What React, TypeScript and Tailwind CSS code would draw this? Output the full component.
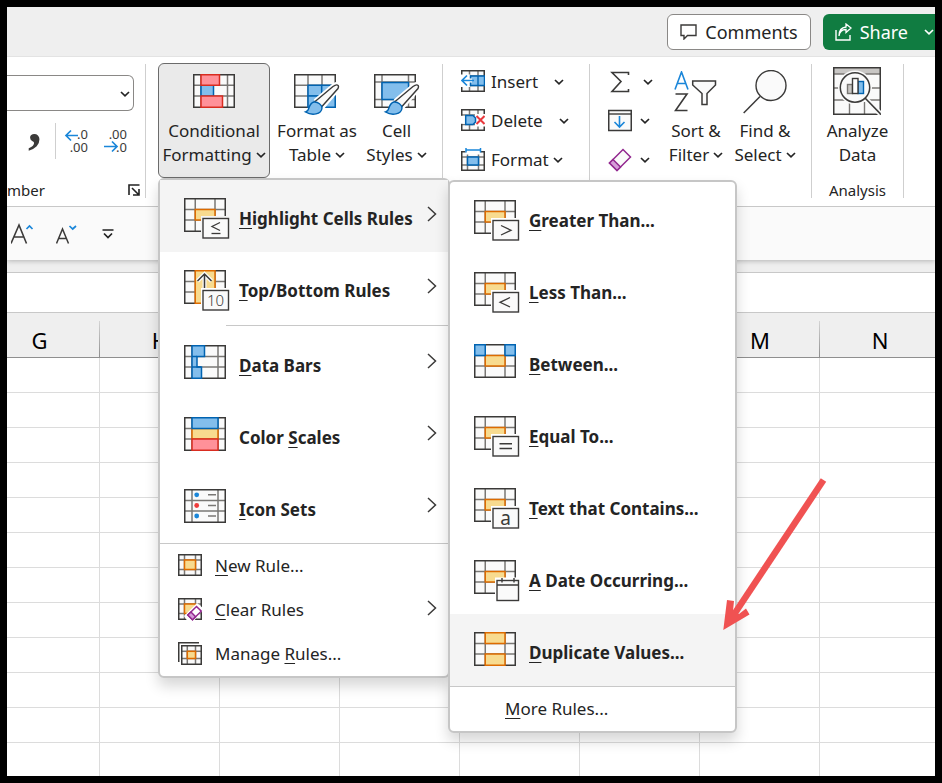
import type { ReactNode } from "react";

const DARK = "#3b3a39";
const MID = "#797774";
const PAPER = "#fafafa";

const BLUE = { fill: "#83beec", stroke: "#0063b1" };
const ORANGE = { fill: "#f8db8f", stroke: "#dd6b00" };
const RED = { fill: "#ff9199", stroke: "#d92c20" };
const PURPLE = "#92278f";

type Tone = { fill: string; stroke: string };

interface CellProps {
  x: number;
  y: number;
  w: number;
  h: number;
  tone: Tone;
}

const Cell = ({ x, y, w, h, tone }: CellProps) => (
  <rect x={x} y={y} width={w} height={h} fill={tone.fill} stroke={tone.stroke} strokeWidth="1.5" />
);

const Grid = ({ w = 42, h = 34, xs, ys }: { w?: number; h?: number; xs: number[]; ys: number[] }) => (
  <g>
    <rect x="1" y="1" width={w - 2} height={h - 2} fill={PAPER} />
    <g stroke={MID} strokeWidth="1.5">
      {xs.map((x) => (
        <path key={`x${x}`} d={`M${x} 1V${h - 1}`} />
      ))}
      {ys.map((y) => (
        <path key={`y${y}`} d={`M1 ${y}H${w - 1}`} />
      ))}
    </g>
    <rect x="0.75" y="0.75" width={w - 1.5} height={h - 1.5} fill="none" stroke={DARK} strokeWidth="1.5" />
  </g>
);

const LargeIcon = ({ children }: { children: ReactNode }) => (
  <svg width="46" height="42" viewBox="0 0 46 42" fill="none" aria-hidden="true" className="shrink-0">
    {children}
  </svg>
);

// Rule icon: table with one marked cell and a small card over its corner
const RuleIcon = ({ children, halo = "white" }: { children: ReactNode; halo?: string }) => (
  <LargeIcon>
    <Grid xs={[11.25, 31]} ys={[11.5, 22]} />
    <Cell x={11.25} y={11.5} w={19.75} h={10.5} tone={ORANGE} />
    <rect x="17" y="18" width="30" height="25" fill={halo} />
    <rect x="19" y="20.5" width="25.5" height="19.5" fill={PAPER} stroke={DARK} strokeWidth="1.4" />
    {children}
  </LargeIcon>
);

const HighlightIcon = () => (
  <RuleIcon halo="#f4f4f4">
    <path d="M36 24.500L28 28.500L36 32.500" stroke={DARK} strokeWidth="1.3" />
    <path d="M27.500 35.500H36.500" stroke={DARK} strokeWidth="1.3" />
  </RuleIcon>
);

const TopBottomIcon = () => (
  <LargeIcon>
    <Grid xs={[11.25, 31]} ys={[11.5, 22]} />
    <Cell x={11.25} y={0.75} w={19.75} h={32.5} tone={ORANGE} />
    <path d="M20.5 20V4M13.5 11L20.5 4L27.5 11" stroke={PAPER} strokeWidth="4" />
    <path d="M20.5 20V4M13.5 11L20.5 4L27.5 11" stroke={DARK} strokeWidth="1.5" />
    <rect x="17" y="18" width="30" height="25" fill="white" />
    <rect x="19" y="20.5" width="25.5" height="19.5" fill={PAPER} stroke={DARK} strokeWidth="1.4" />
    <text x="31.5" y="36" textAnchor="middle" fontSize="15" fontWeight="300" fill={DARK}>
      10
    </text>
  </LargeIcon>
);

const DataBarsIcon = () => (
  <LargeIcon>
    <Grid xs={[8, 34]} ys={[11.5, 22]} />
    <path
      d="M8 0.75H20.5V11.5H13V22H17.5V33.25H8Z"
      fill={BLUE.fill}
      stroke={BLUE.stroke}
      strokeWidth="1.5"
    />
    <path d="M8 11.5H13M8 22H17" stroke={BLUE.stroke} strokeWidth="1.5" />
  </LargeIcon>
);

const ColorScalesIcon = () => (
  <LargeIcon>
    <Grid xs={[8, 34]} ys={[11.5, 22]} />
    <Cell x={8} y={11.5} w={26} h={10.5} tone={ORANGE} />
    <Cell x={8} y={0.75} w={26} h={10.75} tone={BLUE} />
    <Cell x={8} y={22} w={26} h={11.25} tone={RED} />
  </LargeIcon>
);

const IconSetsIcon = () => (
  <LargeIcon>
    <Grid xs={[8, 34]} ys={[11.5, 22]} />
    <circle cx="12.7" cy="5.8" r="2.4" fill="#1a86d9" />
    <circle cx="12.7" cy="16.5" r="2.4" fill="#ee3b3b" />
    <circle cx="12.7" cy="27" r="2.4" fill="#1a86d9" />
    <path d="M24 5.8H32M24 16.5H32M24 27H32" stroke={MID} strokeWidth="1.5" />
  </LargeIcon>
);

const GreaterIcon = () => (
  <RuleIcon>
    <path d="M27 25.5L37 30.3L27 35" stroke={DARK} strokeWidth="1.3" />
  </RuleIcon>
);

const LessIcon = () => (
  <RuleIcon>
    <path d="M36 25.5L26 30.3L36 35" stroke={DARK} strokeWidth="1.3" />
  </RuleIcon>
);

const BetweenIcon = () => (
  <LargeIcon>
    <Grid xs={[11.25, 31]} ys={[11.5, 22]} />
    <Cell x={11.25} y={11.5} w={19.75} h={10.5} tone={ORANGE} />
    <Cell x={0.75} y={0.75} w={10.5} h={10.75} tone={BLUE} />
    <Cell x={31} y={0.75} w={10.25} h={10.75} tone={BLUE} />
  </LargeIcon>
);

const EqualIcon = () => (
  <RuleIcon>
    <path d="M25.5 27.8H38M25.5 32.5H38" stroke={DARK} strokeWidth="1.4" />
  </RuleIcon>
);

const TextIcon = () => (
  <RuleIcon>
    <text x="31.7" y="36.5" textAnchor="middle" fontSize="19" fontWeight="400" fill={DARK}>
      a
    </text>
  </RuleIcon>
);

const DateIcon = () => (
  <LargeIcon>
    <Grid xs={[11.25, 31]} ys={[11.5, 22]} />
    <Cell x={11.25} y={11.5} w={19.75} h={10.5} tone={ORANGE} />
    <rect x="21" y="17.5" width="26" height="25" fill="white" />
    <rect x="23" y="20.5" width="21.5" height="20" fill={PAPER} stroke={DARK} strokeWidth="1.4" />
    <path d="M23 25H44.500M28 18V22.500M40 18V22.500" stroke={DARK} strokeWidth="1.4" />
  </LargeIcon>
);

const DuplicateIcon = () => (
  <LargeIcon>
    <Grid xs={[11.25, 31]} ys={[11.5, 22]} />
    <Cell x={11.25} y={0.75} w={19.75} h={10.75} tone={ORANGE} />
    <Cell x={11.25} y={22} w={19.75} h={11.25} tone={ORANGE} />
  </LargeIcon>
);

const SmallIcon = ({ children }: { children: ReactNode }) => (
  <svg width="24" height="24" viewBox="0 0 24 24" fill="none" aria-hidden="true" className="shrink-0">
    {children}
  </svg>
);

const NewRuleIcon = () => (
  <SmallIcon>
    <Grid w={24} h={22} xs={[6.5, 17.5]} ys={[6, 15.5]} />
    <Cell x={6.5} y={6} w={11} h={9.5} tone={ORANGE} />
  </SmallIcon>
);

const ClearRulesIcon = () => (
  <SmallIcon>
    <Grid w={24} h={22} xs={[6.5, 17.5]} ys={[6, 15.5]} />
    <Cell x={6.5} y={6} w={11} h={9.5} tone={ORANGE} />
    <path d="M6 18L19 5L26 11L15 24H10Z" fill="white" />
    <path d="M9.800 17L18.500 8.500L23.300 13.200L14.500 21.800Z" fill="white" stroke={PURPLE} strokeWidth="1.5" />
    <path d="M9.800 17L13 14L17.600 18.700L14.500 21.800Z" fill="#d59dd8" stroke={PURPLE} strokeWidth="1.5" />
  </SmallIcon>
);

const ManageRulesIcon = () => (
  <SmallIcon>
    <path d="M0.750 20V0.750H21" stroke={DARK} strokeWidth="1.5" />
    <g transform="translate(3 3)">
      <Grid w={21} h={20} xs={[6.3, 14.5]} ys={[6.3, 13.5]} />
      <Cell x={6.3} y={6.3} w={8.2} h={7.2} tone={ORANGE} />
    </g>
  </SmallIcon>
);

const Brush = () => (
  <g>
    <path d="M21 27L40 11C44 8 47 11 45 14L29 33C28 41 18 42 11 39" stroke="white" strokeWidth="4" fill="white" />
    <path
      d="M20.500 28L39 12.500C43 9.500 45.500 11 44 14.500L27 33.500Z"
      fill={PAPER}
      stroke={DARK}
      strokeWidth="1.4"
    />
    <path
      d="M20 28C24 27.500 28 31 28 34C27.500 40.500 18 42 11.500 38C16.500 37 13.500 29.500 20 28Z"
      fill={BLUE.fill}
      stroke={BLUE.stroke}
      strokeWidth="1.4"
    />
  </g>
);

const ConditionalIcon = () => (
  <LargeIcon>
    <g transform="translate(2 0)">
      <Grid xs={[8, 34.5]} ys={[11.25, 22]} />
      <Cell x={8} y={11.25} w={12.5} h={10.75} tone={BLUE} />
      <Cell x={8} y={0.75} w={18.5} h={10.5} tone={RED} />
      <Cell x={8} y={22} w={21.5} h={11.25} tone={RED} />
    </g>
  </LargeIcon>
);

const FormatTableIcon = () => (
  <LargeIcon>
    <Grid xs={[14, 28]} ys={[11.25, 22]} />
    <Cell x={14} y={11.25} w={13.7} h={10.75} tone={BLUE} />
    <Cell x={27.7} y={11.25} w={13.5} h={10.75} tone={BLUE} />
    <Cell x={14} y={22} w={13.7} h={11.25} tone={BLUE} />
    <Cell x={27.7} y={22} w={13.5} h={11.25} tone={BLUE} />
    <Brush />
  </LargeIcon>
);

const CellStylesIcon = () => (
  <LargeIcon>
    <Grid xs={[8, 34.5]} ys={[8, 25.5]} />
    <Cell x={8} y={8.5} w={26.5} h={17} tone={BLUE} />
    <Brush />
  </LargeIcon>
);

const SortIcon = () => (
  <svg width="44" height="42" viewBox="0 0 44 42" fill="none" aria-hidden="true">
    <path d="M1 18.500L7.500 1L14 18.500M3.500 12.500H11.500" stroke="#1a86d9" strokeWidth="1.6" />
    <path d="M1.500 23H13L1.500 39.500H13.500" stroke={DARK} strokeWidth="1.6" />
    <path d="M18.700 10H41.500V14L33 22.500V33.500H28V22.500L18.700 14Z" fill={PAPER} stroke={DARK} strokeWidth="1.5" />
  </svg>
);

const FindIcon = () => (
  <svg width="44" height="44" viewBox="0 0 44 44" fill="none" aria-hidden="true">
    <circle cx="28" cy="15.500" r="15" fill={PAPER} stroke={DARK} strokeWidth="1.4" />
    <path d="M17 26.500L0.700 43" stroke={DARK} strokeWidth="1.5" />
  </svg>
);

const AnalyzeIcon = () => (
  <svg width="48" height="48" viewBox="0 0 48 48" fill="none" aria-hidden="true">
    <rect x="1" y="1" width="46" height="46" fill={PAPER} />
    <rect x="1" y="1" width="46" height="6" fill="#c8c6c4" />
    <path d="M1 7H47M1 21H8M38 21H47M1 33H12M34 33H47M16.500 35V47M31.500 35V47" stroke={MID} strokeWidth="1.4" />
    <rect x="0.750" y="0.750" width="46.500" height="46.500" stroke={DARK} strokeWidth="1.500" />
    <circle cx="22" cy="20.500" r="17" fill={PAPER} />
    <path d="M32 31L47.500 47" stroke={PAPER} strokeWidth="5" />
    <circle cx="22" cy="20.500" r="14.700" fill={PAPER} stroke={DARK} strokeWidth="1.500" />
    <path d="M32 31L47.500 47" stroke={DARK} strokeWidth="1.600" />
    <rect x="14.500" y="17.500" width="5" height="9" fill="#c8c6c4" stroke={MID} strokeWidth="1.400" />
    <rect x="25" y="14.500" width="5.500" height="12" fill={BLUE.fill} stroke={BLUE.stroke} strokeWidth="1.400" />
    <rect x="19.500" y="11.500" width="5.500" height="15" fill="white" stroke={DARK} strokeWidth="1.400" />
  </svg>
);

const InsertIcon = () => (
  <SmallIcon>
    <Grid w={24} h={22} xs={[8.5, 17]} ys={[6, 15.5]} />
    <rect x="-1" y="4.500" width="10" height="12.500" fill="white" />
    <Cell x={9.5} y={6} w={14} h={9.5} tone={BLUE} />
    <path d="M17 6V15.500" stroke={BLUE.stroke} strokeWidth="1.400" />
    <path d="M11 10.500H2" stroke="white" strokeWidth="4" />
    <path d="M13 10.500H1M6 5.500L1 10.500L6 15.500" stroke="#1a86d9" strokeWidth="1.700" />
  </SmallIcon>
);

const DeleteIcon = () => (
  <SmallIcon>
    <Grid w={24} h={22} xs={[8.5, 17]} ys={[6, 15.5]} />
    <rect x="-1" y="6.800" width="6" height="8" fill="white" />
    <rect x="14" y="5" width="12" height="12.500" fill="white" />
    <path d="M4.700 6.500H12L14.500 9V13L12 15.500H4.700Z" fill={BLUE.fill} stroke={BLUE.stroke} strokeWidth="1.500" />
    <path d="M15.500 7L23.500 15M23.500 7L15.500 15" stroke="#e8383d" strokeWidth="2" />
  </SmallIcon>
);

const FormatIcon = () => (
  <SmallIcon>
    <g transform="translate(0 3)">
      <Grid w={24} h={20} xs={[6.5, 17.5]} ys={[6, 14]} />
      <rect x="4.500" y="-1" width="15" height="4.500" fill="white" />
      <Cell x={6.5} y={6} w={11} h={8} tone={BLUE} />
    </g>
    <path d="M5 2H19.500M5 0V4.500M19.500 0V4.500" stroke="#1a86d9" strokeWidth="1.500" />
  </SmallIcon>
);

const SumIcon = () => (
  <SmallIcon>
    <path d="M20.500 5V2.500H4L13 11.500L4 21.500H20.500V19" stroke={DARK} strokeWidth="1.600" />
  </SmallIcon>
);

const FillIcon = () => (
  <SmallIcon>
    <rect x="0.750" y="1.500" width="22.500" height="20" fill={PAPER} stroke={DARK} strokeWidth="1.500" />
    <path d="M1 5H23" stroke={DARK} strokeWidth="1.400" />
    <path d="M11.500 7V18M6.500 13L11.500 18L16.500 13" stroke="#1a86d9" strokeWidth="1.600" />
  </SmallIcon>
);

const EraserIcon = () => (
  <SmallIcon>
    <path d="M1.500 15L15 1.500L22.500 9L9 22.500Z" fill={PAPER} stroke={PURPLE} strokeWidth="1.500" />
    <path d="M1.500 15L5 11.500L12.500 19L9 22.500Z" fill="#d59dd8" stroke={PURPLE} strokeWidth="1.500" />
  </SmallIcon>
);

const Caret = ({ className = "" }: { className?: string }) => (
  <svg width="10" height="6" viewBox="0 0 10 6" fill="none" aria-hidden="true" className={`inline-block shrink-0 ${className}`}>
    <path d="M1 1L5 4.800L9 1" stroke="currentColor" strokeWidth="1.700" />
  </svg>
);

// "&" in a label marks the access key, which is underlined
const Label = ({ text }: { text: string }) => {
  const at = text.indexOf("&");
  return (
    <span className="whitespace-nowrap">
      {text.slice(0, at)}
      <span className="underline decoration-1 underline-offset-[3px]">{text[at + 1]}</span>
      {text.slice(at + 2)}
    </span>
  );
};

const Arrow = () => (
  <svg width="10" height="16" viewBox="0 0 10 16" fill="none" aria-hidden="true" className="mb-1 shrink-0">
    <path d="M1 1L8.500 8L1 15" stroke={DARK} strokeWidth="1.500" />
  </svg>
);

interface ItemProps {
  label: string;
  icon?: ReactNode;
  arrow?: boolean;
  active?: boolean;
}

const LargeItem = ({ label, icon, arrow, active }: ItemProps) => (
  <button
    role="menuitem"
    className={`flex h-[72px] w-full items-center pl-6 pr-[11px] text-left text-[17px] font-bold leading-6 hover:bg-[#f4f4f4] ${
      active ? "bg-[#f4f4f4]" : ""
    }`}
  >
    <span className="mt-1.5 flex flex-1 items-center gap-[9px]">
      {icon}
      <Label text={label} />
    </span>
    {arrow && <Arrow />}
  </button>
);

const SmallItem = ({ label, icon, arrow }: ItemProps) => (
  <button
    role="menuitem"
    className="flex h-11 w-full items-center pl-[18px] pr-[11px] text-left text-[17px] leading-6 hover:bg-[#f4f4f4]"
  >
    <span className="flex flex-1 items-center gap-[13px]">
      {icon ?? <span className="w-6" />}
      <Label text={label} />
    </span>
    {arrow && <Arrow />}
  </button>
);

const menuBox =
  "absolute rounded-md border-2 border-[#c6c6c6] bg-white shadow-[0_8px_14px_rgba(0,0,0,0.16)]";

const RulesSubmenu = () => (
  <div role="menu" aria-label="Highlight Cells Rules" className={`${menuBox} left-full top-0 w-[289px]`}>
    <LargeItem label="&Greater Than..." icon={<GreaterIcon />} />
    <LargeItem label="&Less Than..." icon={<LessIcon />} />
    <LargeItem label="&Between..." icon={<BetweenIcon />} />
    <LargeItem label="&Equal To..." icon={<EqualIcon />} />
    <LargeItem label="&Text that Contains..." icon={<TextIcon />} />
    <LargeItem label="&A Date Occurring..." icon={<DateIcon />} />
    <LargeItem label="&Duplicate Values..." icon={<DuplicateIcon />} active />
    <div className="h-px bg-[#c8c8c8]" />
    <SmallItem label="&More Rules..." />
  </div>
);

const ConditionalMenu = () => (
  <div role="menu" aria-label="Conditional Formatting" className={`${menuBox} left-0 top-full z-10 w-[292px]`}>
    <LargeItem label="&Highlight Cells Rules" icon={<HighlightIcon />} arrow active />
    <LargeItem label="&Top/Bottom Rules" icon={<TopBottomIcon />} arrow />
    <div className="my-px ml-[66px] h-px bg-[#c8c8c8]" />
    <LargeItem label="&Data Bars" icon={<DataBarsIcon />} arrow />
    <LargeItem label="Color &Scales" icon={<ColorScalesIcon />} arrow />
    <LargeItem label="&Icon Sets" icon={<IconSetsIcon />} arrow />
    <div className="h-px bg-[#c8c8c8]" />
    <SmallItem label="&New Rule..." icon={<NewRuleIcon />} />
    <SmallItem label="&Clear Rules" icon={<ClearRulesIcon />} arrow />
    <SmallItem label="Manage &Rules..." icon={<ManageRulesIcon />} />
    <RulesSubmenu />
  </div>
);

interface RibbonButtonProps {
  lines: [string, string];
  icon: ReactNode;
  caret?: boolean;
  className: string;
}

const RibbonButton = ({ lines, icon, caret = true, className }: RibbonButtonProps) => (
  <button className={`flex h-[115px] flex-col items-center rounded-md text-[17px] leading-6 ${className}`}>
    <span className="flex flex-1 items-start">{icon}</span>
    <span className="whitespace-nowrap">{lines[0]}</span>
    <span className="flex items-center gap-1 whitespace-nowrap">
      {lines[1]}
      {caret && <Caret />}
    </span>
  </button>
);

interface RowButtonProps {
  icon: ReactNode;
  name: string;
  showName?: boolean;
  caretClass: string;
}

const RowButton = ({ icon, name, showName, caretClass }: RowButtonProps) => (
  <button aria-label={name} className="flex h-[39px] items-center text-[17px]">
    {icon}
    {showName && <span className="ml-1.5">{name}</span>}
    <Caret className={caretClass} />
  </button>
);

const Group = ({ children, className }: { children: ReactNode; className: string }) => (
  <div className={`h-[134px] shrink-0 border-r border-[#cfcfcf] ${className}`}>{children}</div>
);

const Decimal = ({ right }: { right?: boolean }) => (
  <svg width="24" height="26" viewBox="0 0 24 26" fill="none" aria-hidden="true" className="overflow-visible">
    <text x="23" y="11" textAnchor="end" fontSize="13" fill={DARK}>
      {right ? ".00" : ".0"}
    </text>
    <text x="23" y="23.500" textAnchor="end" fontSize="13" fill={DARK}>
      {right ? ".0" : ".00"}
    </text>
    {right ? (
      <path d="M0 18.500H12.500M8 13.500L13 18.500L8 23.500" stroke="#1a86d9" strokeWidth="1.700" />
    ) : (
      <path d="M13 7.500H1M6 2.500L1 7.500L6 12.500" stroke="#1a86d9" strokeWidth="1.700" />
    )}
  </svg>
);

const NumberGroup = () => (
  <Group className="flex w-[139px] flex-col">
    <div className="relative mr-[11px] mt-[11px]">
      <select
        aria-label="Number format"
        className="h-9 w-full appearance-none rounded-r-md border border-l-0 border-[#8a8886] bg-white"
      />
      <Caret className="pointer-events-none absolute right-1 top-4" />
    </div>
    <div className="mt-3 flex h-9 items-center">
      <button aria-label="Comma style" className="ml-[22px]">
        <svg width="14" height="22" viewBox="0 0 14 22" aria-hidden="true" className="overflow-visible">
          <text x="-1" y="12" fontSize="54" fontWeight="700" fontFamily="Liberation Serif, serif" fill={DARK}>
            ,
          </text>
        </svg>
      </button>
      <span className="ml-3 h-9 w-px bg-[#cfcfcf]" />
      <button aria-label="Increase decimal" className="ml-[9px]">
        <Decimal />
      </button>
      <button aria-label="Decrease decimal" className="ml-[15px]">
        <Decimal right />
      </button>
    </div>
    <div className="mt-auto flex items-center justify-between pr-[5px] text-[15px] leading-4">
      <span>mber</span>
      <button aria-label="Number settings">
        <svg width="12" height="12" viewBox="0 0 12 12" fill="none" aria-hidden="true">
          <path d="M1 11V1H11.500M4 4L10.500 10.500M11 5V11H5" stroke="#222" strokeWidth="1.600" />
        </svg>
      </button>
    </div>
  </Group>
);

const Ribbon = () => (
  <div className="flex h-[150px] border-b border-[#c8c8c8] bg-white pt-[7px]">
    <NumberGroup />
    <Group className="flex items-start pl-3 pr-[13px]">
      <div className="relative -mt-px">
        <RibbonButton
          lines={["Conditional", "Formatting"]}
          icon={<ConditionalIcon />}
          className="w-28 border border-[#6b6b6b] bg-[#eaeaea] pb-2.5 pt-2.5"
        />
        <ConditionalMenu />
      </div>
      <RibbonButton lines={["Format as", "Table"]} icon={<FormatTableIcon />} className="w-[92px] pb-3 pl-0.5 pt-2.5" />
      <RibbonButton lines={["Cell", "Styles"]} icon={<CellStylesIcon />} className="w-[67px] pb-3 pl-0.5 pt-2.5" />
    </Group>
    <Group className="w-[147px] pl-[18px]">
      <div className="-mt-0.5">
        <RowButton icon={<InsertIcon />} name="Insert" showName caretClass="ml-4" />
        <RowButton icon={<DeleteIcon />} name="Delete" showName caretClass="ml-4" />
        <RowButton icon={<FormatIcon />} name="Format" showName caretClass="ml-1" />
      </div>
    </Group>
    <Group className="flex w-[222px] pl-[18px]">
      <div className="-mt-0.5">
        <RowButton icon={<SumIcon />} name="AutoSum" caretClass="ml-[11px]" />
        <RowButton icon={<FillIcon />} name="Fill" caretClass="ml-2" />
        <RowButton icon={<EraserIcon />} name="Clear" caretClass="ml-2" />
      </div>
      <RibbonButton lines={["Sort &", "Filter"]} icon={<SortIcon />} className="ml-2 w-[70px] pb-3 pt-[7px]" />
      <RibbonButton lines={["Find &", "Select"]} icon={<FindIcon />} className="w-[68px] pb-3 pt-1.5" />
    </Group>
    <Group className="flex w-[92px] flex-col items-center">
      <RibbonButton lines={["Analyze", "Data"]} icon={<AnalyzeIcon />} caret={false} className="pb-3 pt-[3px]" />
      <span className="mt-auto text-[15px] leading-4">Analysis</span>
    </Group>
  </div>
);

const TitleBar = () => (
  <div className="flex h-[50px] items-center justify-end gap-3 border-b border-[#e3e3e3] bg-[#efefef]">
    <button className="flex h-9 items-center gap-2 rounded-md border border-[#8a8886] bg-white px-3 text-[18px]">
      <svg width="17" height="16" viewBox="0 0 17 16" fill="none" aria-hidden="true">
        <path d="M1 1H16V11.500H7.500L4 15V11.500H1Z" stroke={DARK} strokeWidth="1.400" />
      </svg>
      <span className="pt-0.5">Comments</span>
    </button>
    <button className="flex h-9 items-center rounded-l-md bg-[#107c41] pl-3 text-[18px] text-white">
      <svg width="17" height="18" viewBox="0 0 17 18" fill="none" aria-hidden="true">
        <path d="M1 7V17H15V12" stroke="white" strokeWidth="1.400" />
        <path d="M4 13C4.500 9 7 6.500 11 6.500V9.500L16 5L11 1V4C6.500 4.500 4 8 4 13Z" stroke="white" strokeWidth="1.300" />
      </svg>
      <span className="ml-2 pt-0.5">Share</span>
      <Caret className="ml-4 mr-px" />
    </button>
  </div>
);

const QuickAccess = () => (
  <div className="z-0 flex h-[53px] shrink-0 items-center bg-[#fafafa] shadow-[0_1px_5px_rgba(0,0,0,0.25)]">
    <button aria-label="Increase font size" className="ml-1">
      <svg width="24" height="24" viewBox="0 0 24 24" fill="none" aria-hidden="true">
        <path d="M0 21.500L8 3L15.500 21.500M3 15H13" stroke={DARK} strokeWidth="1.600" />
        <path d="M15.500 7L18.500 4L21.500 7" stroke="#1a86d9" strokeWidth="1.700" />
      </svg>
    </button>
    <button aria-label="Decrease font size" className="ml-[21px]">
      <svg width="24" height="24" viewBox="0 0 24 24" fill="none" aria-hidden="true">
        <path d="M0.500 21.500L6.500 7L12.500 21.500M2.500 16.500H10.500" stroke={DARK} strokeWidth="1.500" />
        <path d="M13.500 4L16.700 7L20 4" stroke="#1a86d9" strokeWidth="1.700" />
      </svg>
    </button>
    <button aria-label="Customize toolbar" className="ml-[22px]">
      <svg width="12" height="12" viewBox="0 0 12 12" fill="none" aria-hidden="true">
        <path d="M0.500 2H11.500M2 5.500L6 9.500L10 5.500" stroke="#222" strokeWidth="1.700" />
      </svg>
    </button>
  </div>
);

const columns = [
  { name: "G", width: "w-[93px]" },
  { name: "H", width: "w-[120px]" },
  { name: "I", width: "w-[120px]" },
  { name: "J", width: "w-[120px]" },
  { name: "K", width: "w-[120px]" },
  { name: "L", width: "w-[120px]" },
  { name: "M", width: "w-[120px]" },
  { name: "N", width: "w-[120px]" },
];

const Sheet = () => (
  <div className="min-h-0 flex-1 overflow-hidden border-t border-[#c8c8c8] bg-white">
    <table className="w-[933px] table-fixed border-separate border-spacing-0">
      <thead>
        <tr className="h-[45px] bg-[#efefef]">
          {columns.map((col) => (
            <th
              key={col.name}
              className={`${col.width} border-b border-[#8f8f8f] bg-[linear-gradient(to_bottom,#d4d4d4,#8f8f8f)] bg-[length:1px_36px] bg-right-bottom bg-no-repeat pt-2.5 text-[22px] font-normal text-black ${
                col.name === "G" ? "pr-7" : ""
              }`}
            >
              {col.name}
            </th>
          ))}
        </tr>
      </thead>
      <tbody>
        {Array.from({ length: 12 }, (_, row) => (
          <tr key={row} className="h-[35px]">
            {columns.map((col) => (
              <td key={col.name} className="border-b border-r border-[#dcdcdc]" />
            ))}
          </tr>
        ))}
      </tbody>
    </table>
  </div>
);

const Pointer = () => (
  <svg
    width="110"
    height="160"
    viewBox="0 0 110 160"
    fill="none"
    aria-hidden="true"
    className="pointer-events-none absolute left-[712px] top-[468px] z-20"
  >
    <path d="M104.500 5L16 138" stroke="#f05252" strokeWidth="6.500" />
    <path d="M4.300 155L8 125L15 126L14 136L20 139L27 133.500L30.500 139.500Z" fill="#f05252" />
  </svg>
);

export default function App() {
  return (
    <div className="relative flex h-screen flex-col overflow-hidden border-[7px] border-black bg-[#efefef] font-['Noto_Sans','Open_Sans',sans-serif] text-[#242424]">
      <TitleBar />
      <div className="relative z-10 shrink-0">
        <Ribbon />
      </div>
      <QuickAccess />
      <div className="mt-3 h-10 shrink-0 border-t border-[#c8c8c8] bg-white" />
      <Sheet />
      <Pointer />
    </div>
  );
}
